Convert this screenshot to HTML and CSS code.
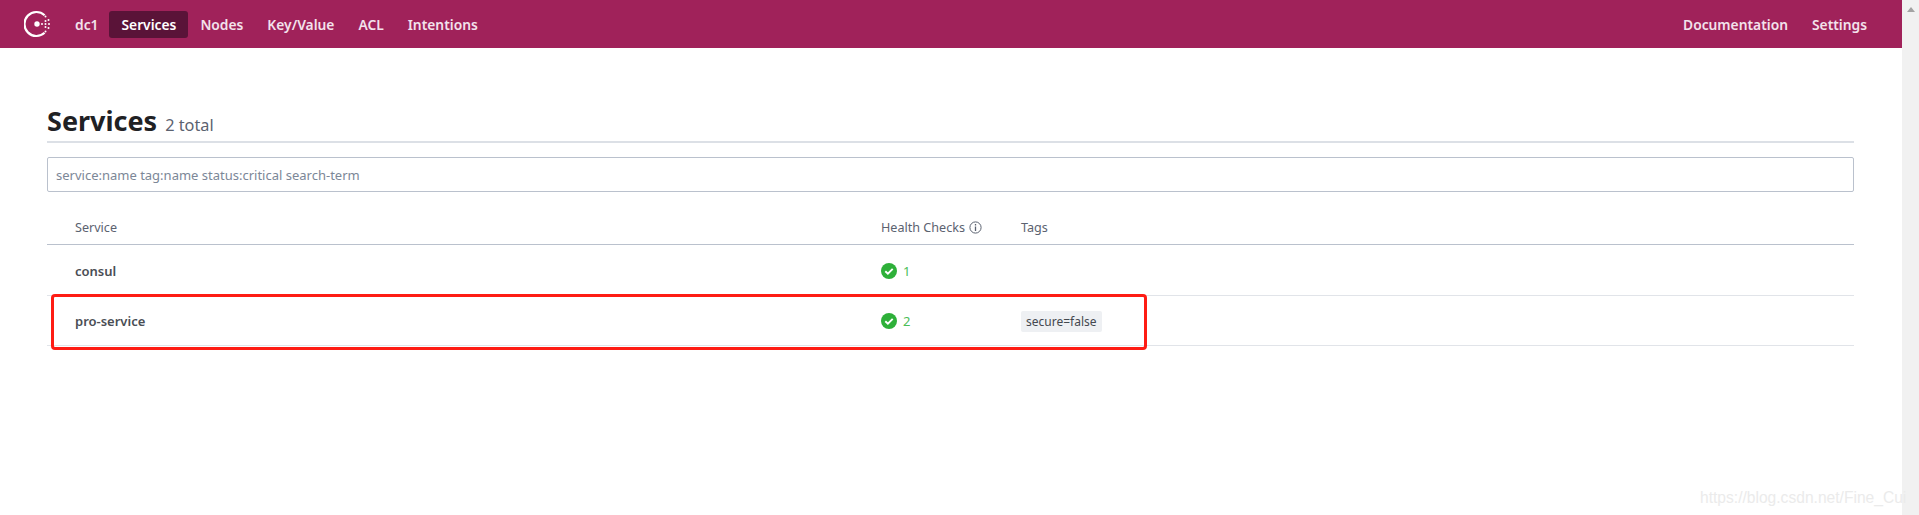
FILE: index.html
```html
<!DOCTYPE html>
<html lang="en">
<head>
<meta charset="utf-8">
<title>Services - Consul</title>
<link rel="stylesheet" href="styles.css">
</head>
<body>
<div class="window">
  <div class="page">
    <header class="topbar">
      <svg class="logo" viewBox="0 0 28 28" width="28" height="28" aria-hidden="true">
        <path class="logo-ring" d="M20.6 5.2A12 12 0 1 0 20.6 22.8"/>
        <circle class="logo-dot" cx="13" cy="14" r="2.7"/>
        <circle class="logo-dot" cx="18" cy="14" r="1"/>
        <circle class="logo-dot" cx="21.5" cy="6.5" r="1"/>
        <circle class="logo-dot" cx="24.5" cy="10" r="1"/>
        <circle class="logo-dot" cx="21.5" cy="11" r="1"/>
        <circle class="logo-dot" cx="25" cy="14" r="1"/>
        <circle class="logo-dot" cx="21.5" cy="14" r="1"/>
        <circle class="logo-dot" cx="24.5" cy="18" r="1"/>
        <circle class="logo-dot" cx="21.5" cy="17" r="1"/>
        <circle class="logo-dot" cx="21.5" cy="21.5" r="1"/>
      </svg>
      <nav class="nav">
        <a class="nav-item dc">dc1</a>
        <a class="nav-item active">Services</a>
        <a class="nav-item">Nodes</a>
        <a class="nav-item">Key/Value</a>
        <a class="nav-item">ACL</a>
        <a class="nav-item">Intentions</a>
      </nav>
      <nav class="nav nav-right">
        <a class="nav-item">Documentation</a>
        <a class="nav-item">Settings</a>
      </nav>
    </header>
    <main class="content">
      <div class="title-row">
        <h1 class="title">Services</h1>
        <span class="count">2 total</span>
      </div>
      <input class="search" type="text" placeholder="service:name tag:name status:critical search-term">
      <div class="row row-head">
        <div class="col-name">Service</div>
        <div class="col-health">Health Checks
          <svg class="info" viewBox="0 0 13 13" width="13" height="13" aria-hidden="true">
            <circle cx="6.5" cy="6.5" r="5.6" fill="none" stroke="currentColor" stroke-width="1"/>
            <path d="M6.5 5.6V10M6.5 3v1.4" stroke="currentColor" stroke-width="1.3" fill="none"/>
          </svg>
        </div>
        <div class="col-tags">Tags</div>
      </div>
      <div class="row row-body">
        <div class="col-name name">consul</div>
        <div class="col-health health">
          <svg class="check" viewBox="0 0 16 16" width="16" height="16" aria-hidden="true">
            <circle cx="8" cy="8" r="8" fill="#2eb039"/>
            <path d="M4.3 8.2l2.6 2.5 4.8-4.9" fill="none" stroke="#fff" stroke-width="1.9"/>
          </svg>
          <span>1</span>
        </div>
        <div class="col-tags"></div>
      </div>
      <div class="row row-body">
        <div class="col-name name">pro-service</div>
        <div class="col-health health">
          <svg class="check" viewBox="0 0 16 16" width="16" height="16" aria-hidden="true">
            <circle cx="8" cy="8" r="8" fill="#2eb039"/>
            <path d="M4.3 8.2l2.6 2.5 4.8-4.9" fill="none" stroke="#fff" stroke-width="1.9"/>
          </svg>
          <span>2</span>
        </div>
        <div class="col-tags"><span class="tag">secure=false</span></div>
      </div>
    </main>
    <div class="highlight"></div>
    <div class="watermark">https://blog.csdn.net/Fine_Cui</div>
  </div>
  <div class="scrollbar"><span class="scroll-up"></span></div>
</div>
</body>
</html>
```

FILE: styles.css
```css
* { box-sizing: border-box; }
html, body { margin: 0; height: 100%; overflow: hidden; }
body { font-family: "Noto Sans", "Open Sans", sans-serif; color: #1f2124; background: #fff; }
.window { display: flex; height: 515px; }
.page { flex: 1; position: relative; min-width: 0; }
.scrollbar { width: 17px; background: #f1f1f1; display: flex; justify-content: center; padding-top: 7px; }
.scroll-up { width: 0; height: 0; border-left: 4px solid transparent; border-right: 4px solid transparent; border-bottom: 5px solid #a3a3a3; }

.topbar { height: 48px; background: #a0225a; display: flex; align-items: center; padding-left: 24px; padding-right: 23px; }
.logo { display: block; flex: none; margin-right: 9px; }
.logo-ring { fill: none; stroke: #fff; stroke-width: 2.2; }
.logo-dot { fill: #fff; }
.nav { display: flex; align-items: center; gap: 0; }
.nav-right { margin-left: auto; gap: 0; }
.nav-item { color: #f3e2ec; font-size: 13.8px; font-weight: 600; line-height: 27px; padding: 0 12px; border-radius: 3px; }
.nav-item.dc { padding-left: 14px; padding-right: 11px; }
.nav-item.active { background: #5a1338; color: #fff; }

.content { padding: 0 48px 0 47px; }
.title-row { display: flex; align-items: baseline; gap: 8px; height: 95px; padding-top: 54px; border-bottom: 2px solid #dce0e6; }
.title { margin: 0; font-size: 27px; font-weight: 700; line-height: 38px; color: #1f2124; }
.count { font-size: 16.3px; color: #5b6270; }
.search { display: block; width: 100%; height: 35px; margin-top: 14px; padding: 0 8px; border: 1px solid #bac1cd; border-radius: 2px; font: inherit; font-size: 13px; color: #333; }
.search::placeholder { color: #7c8797; opacity: 1; }

.row { display: flex; align-items: center; height: 50.5px; border-bottom: 1px solid #e1e4e9; padding-left: 28px; font-size: 13px; }
.row-body { padding-top: 2px; }
.row-head { height: 53px; padding-top: 19px; border-bottom-color: #bac1cd; color: #5b6270; font-size: 12.6px; }
.col-name { width: 806px; }
.col-health { width: 140px; display: flex; align-items: center; gap: 4px; }
.col-tags { flex: 1; }
.name { font-size: 13px; font-weight: 600; color: #4a4e55; }
.health { color: #4bbd57; gap: 6px; font-size: 13px; }
.check { display: block; }
.info { display: block; color: #5b6270; }
.tag { display: inline-block; background: #eef0f3; color: #44484f; font-size: 12px; line-height: 21px; padding: 0 5px; border-radius: 2px; }

.highlight { position: absolute; left: 51px; top: 294px; width: 1096px; height: 56px; border: 3px solid #fe1c14; border-radius: 4px; }
.watermark { position: absolute; left: 1700px; top: 489px; font-family: "Liberation Sans", sans-serif; font-size: 15.6px; color: #ebebeb; white-space: nowrap; z-index: 1; }
```
